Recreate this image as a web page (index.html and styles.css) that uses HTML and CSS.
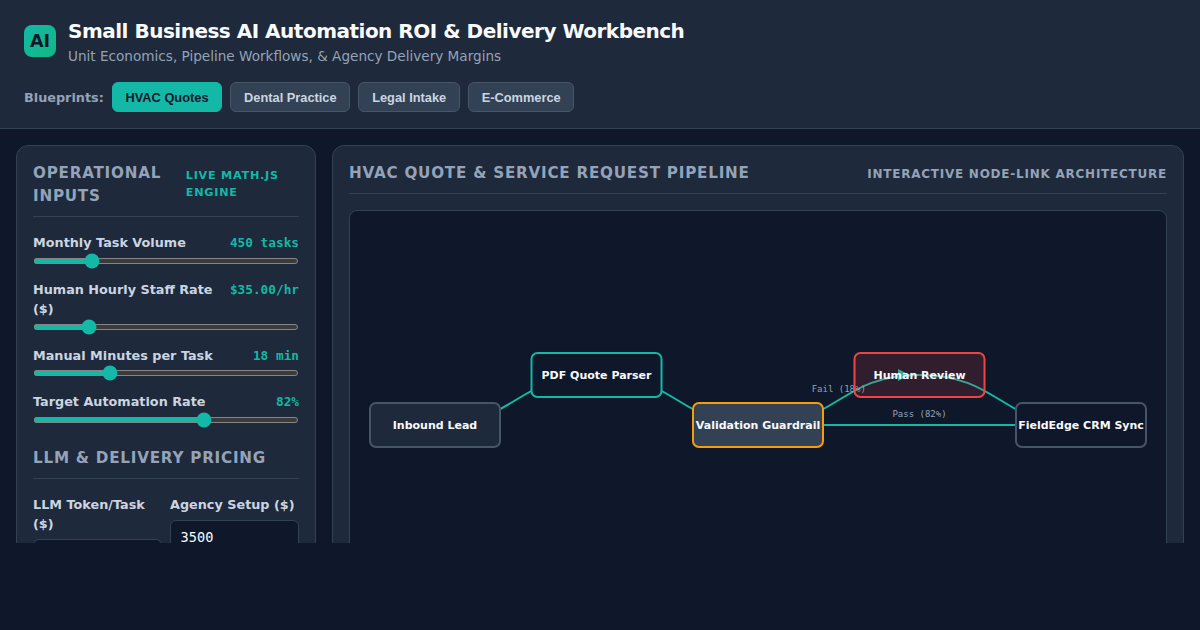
FILE: index.html
```html
<!DOCTYPE html>
<html lang="en">
<head>
<meta charset="utf-8">
<title>Small Business AI Automation ROI &amp; Delivery Workbench</title>
<link rel="stylesheet" href="styles.css">
</head>
<body>
<header class="header">
  <div class="brand">
    <div class="logo">AI</div>
    <div>
      <h1 class="title">Small Business AI Automation ROI &amp; Delivery Workbench</h1>
      <p class="subtitle">Unit Economics, Pipeline Workflows, &amp; Agency Delivery Margins</p>
    </div>
  </div>
  <nav class="blueprints">
    <span class="blueprints-label">Blueprints:</span>
    <button class="tab tab-active">HVAC Quotes</button>
    <button class="tab">Dental Practice</button>
    <button class="tab">Legal Intake</button>
    <button class="tab">E-Commerce</button>
  </nav>
</header>
<main class="workspace">
  <section class="panel">
    <div class="panel-title"><span>Operational Inputs</span><span class="badge">Live Math.js Engine</span></div>
    <div class="control">
      <div class="control-head"><label>Monthly Task Volume</label><span class="value">450 tasks</span></div>
      <input class="slider" type="range" min="50" max="2000" value="450">
    </div>
    <div class="control">
      <div class="control-head"><label>Human Hourly Staff Rate ($)</label><span class="value">$35.00/hr</span></div>
      <input class="slider" type="range" min="15" max="120" value="35">
    </div>
    <div class="control">
      <div class="control-head"><label>Manual Minutes per Task</label><span class="value">18 min</span></div>
      <input class="slider" type="range" min="2" max="60" value="18">
    </div>
    <div class="control">
      <div class="control-head"><label>Target Automation Rate</label><span class="value">82%</span></div>
      <input class="slider" type="range" min="50" max="99" value="82">
    </div>
    <div class="panel-title pricing-title"><span>LLM &amp; Delivery Pricing</span></div>
    <div class="fields">
      <div class="field"><label class="field-label">LLM Token/Task ($)</label><input class="text-input" type="text" value="0.04"></div>
      <div class="field"><label class="field-label">Agency Setup ($)</label><input class="text-input" type="text" value="3500"></div>
    </div>
  </section>
  <section class="panel">
    <div class="panel-title"><span>HVAC Quote &amp; Service Request Pipeline</span><span class="badge badge-muted">Interactive Node-Link Architecture</span></div>
    <div class="canvas">
      <svg class="graph" width="816" height="430" viewBox="0 0 816 430">
        <defs>
          <marker id="arrow" viewBox="0 -5 10 10" refX="18" refY="0" markerWidth="6" markerHeight="6" orient="auto"><path class="arrow" d="M0,-5L10,0L0,5"/></marker>
        </defs>
        <g class="links">
          <path d="M85,214C165.75,214 165.75,164 246.5,164"/>
          <path d="M246.5,164C327.25,164 327.25,214 408,214"/>
          <path d="M408,214C488.75,214 488.75,164 569.5,164" marker-end="url(#arrow)"/>
          <path d="M569.5,164C650.25,164 650.25,214 731,214"/>
          <path d="M408,214H731"/>
        </g>
        <g class="link-labels">
          <text x="488.75" y="181">Fail (18%)</text>
          <text x="569.5" y="206">Pass (82%)</text>
        </g>
        <g class="node node-input" transform="translate(85,214)"><rect x="-65" y="-22" width="130" height="44" rx="6"/><text y="4">Inbound Lead</text></g>
        <g class="node node-ai" transform="translate(246.5,164)"><rect x="-65" y="-22" width="130" height="44" rx="6"/><text y="4">PDF Quote Parser</text></g>
        <g class="node node-guard" transform="translate(408,214)"><rect x="-65" y="-22" width="130" height="44" rx="6"/><text y="4">Validation Guardrail</text></g>
        <g class="node node-human" transform="translate(569.5,164)"><rect x="-65" y="-22" width="130" height="44" rx="6"/><text y="4">Human Review</text></g>
        <g class="node node-output" transform="translate(731,214)"><rect x="-65" y="-22" width="130" height="44" rx="6"/><text y="4">FieldEdge CRM Sync</text></g>
      </svg>
    </div>
  </section>
</main>
</body>
</html>
```
FILE: styles.css
```css
:root { color-scheme: dark; }
* { box-sizing: border-box; margin: 0; padding: 0; }
body {
  height: 543px;
  overflow: hidden;
  display: flex;
  flex-direction: column;
  background: #0f172a;
  color: #f8fafc;
  font-family: "DejaVu Sans", sans-serif;
  line-height: 1.5;
}
html { background: #0f172a; height: 630px; }
.header {
  display: flex;
  flex-direction: column;
  gap: 16px;
  height: 129px;
  flex: none;
  padding: 16px 24px;
  background: #1e293b;
  border-bottom: 1px solid #334155;
}
.brand { display: flex; align-items: center; gap: 12px; height: 50px; }
.logo {
  display: grid;
  place-items: center;
  width: 32px;
  height: 32px;
  border-radius: 8px;
  background: linear-gradient(135deg, #14b8a6, #10b981);
  color: #0f172a;
  font-size: 17.6px;
  font-weight: 700;
}
.title { font-size: 20px; font-weight: 700; letter-spacing: -0.5px; }
.subtitle { font-size: 13.6px; color: #94a3b8; }
.blueprints { display: flex; align-items: center; gap: 8px; height: 30px; }
.blueprints-label { padding-top: 1.4px; font-size: 12.8px; font-weight: 600; color: #94a3b8; }
.tab {
  height: 30px;
  padding: 0 12.8px;
  border: 1px solid #475569;
  border-radius: 6px;
  background: #334155;
  color: #cbd5e1;
  font: 600 12.8px "Liberation Sans", Arial, sans-serif;
}
.tab-active { background: #14b8a6; border-color: #14b8a6; color: #0f172a; }
.workspace {
  display: grid;
  grid-template-columns: 300px 1fr;
  gap: 16px;
  padding: 16px 16px 0;
  flex: 1;
  min-height: 0;
  overflow: hidden;
}
.panel {
  height: 900px;
  padding: 16px;
  background: #1e293b;
  border: 1px solid #334155;
  border-radius: 12px;
}
.panel-title {
  display: flex;
  justify-content: space-between;
  align-items: center;
  padding-bottom: 8px;
  margin-bottom: 16px;
  border-bottom: 1px solid #334155;
  color: #94a3b8;
  font-size: 15.2px;
  font-weight: 600;
  letter-spacing: 0.76px;
  text-transform: uppercase;
}
.badge { font-size: 11.2px; color: #14b8a6; }
.badge-muted { padding-top: 1.4px; font-size: 12px; color: #94a3b8; }
.control { margin-bottom: 15.8px; }
.control-head {
  display: flex;
  justify-content: space-between;
  padding-top: 0.25px;
  margin-bottom: 5.55px;
  color: #cbd5e1;
  font-size: 12.8px;
  font-weight: 600;
}
.value { color: #14b8a6; font-family: "DejaVu Sans Mono", monospace; font-size: 12.75px; }
.slider { display: block; width: 100%; height: 6px; accent-color: #14b8a6; }
.pricing-title { margin-top: 23.6px; }
.fields { display: grid; grid-template-columns: 1fr 1fr; gap: 8px; }
.field-label { display: block; margin-bottom: 6px; color: #cbd5e1; font-size: 12.8px; font-weight: 600; }
.text-input {
  width: 100%;
  height: 35px;
  padding: 0 9.6px;
  border: 1px solid #334155;
  border-radius: 6px;
  background: #0f172a;
  color: #f8fafc;
  font: 13.6px "DejaVu Sans Mono", monospace;
}
.canvas { height: 432px; border: 1px solid #334155; border-radius: 8px; background: #0f172a; }
.graph { display: block; }
.links path { fill: none; stroke: #14b8a6; stroke-width: 2; }
.arrow { fill: #14b8a6; }
.link-labels text { fill: #94a3b8; font: 9px "DejaVu Sans Mono", monospace; text-anchor: middle; }
.node rect { stroke-width: 2; }
.node text { fill: #f8fafc; font-size: 11px; font-weight: 600; text-anchor: middle; }
.node-input rect { fill: #1e293b; stroke: #475569; }
.node-ai rect { fill: #0f172a; stroke: #14b8a6; }
.node-guard rect { fill: #334155; stroke: #f59e0b; }
.node-human rect { fill: rgba(239, 68, 68, 0.15); stroke: #ef4444; }
.node-output rect { fill: #0f172a; stroke: #475569; }
```
